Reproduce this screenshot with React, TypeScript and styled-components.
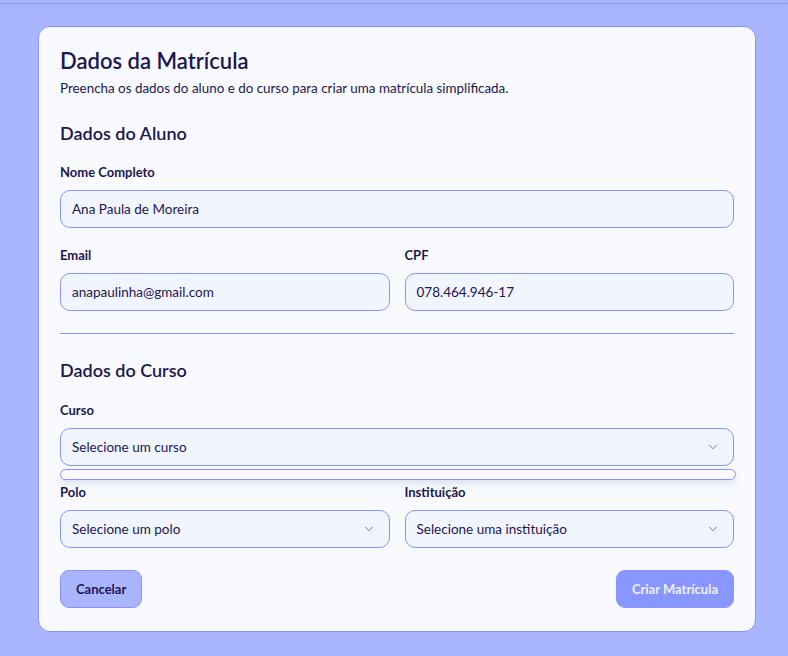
import React from "react";
import styled, { createGlobalStyle } from "styled-components";
import { ChevronDown } from "lucide-react";

const GlobalStyle = createGlobalStyle`
  html, body { margin: 0; padding: 0; background: #aab5ff; }
  body { padding-top: 3px; font-family: Lato, "Noto Sans", sans-serif; color: #1d1650; }
  * { box-sizing: border-box; }
`;

const Page = styled.div`
  border-top: 1px solid #8893f6;
  min-height: 652px;
  padding: 22px 0 0 38px;
`;

const Card = styled.div`
  width: 718px;
  height: 606px;
  background: #f8faff;
  border: 1px solid #8893f6;
  border-radius: 12px;
  padding: 20px 21px 23px 21px;
  display: flex;
  flex-direction: column;
`;

const Title = styled.h1`
  margin: 0;
  font-size: 22px;
  line-height: 28px;
  font-weight: 600;
  color: #1d1650;
`;

const Subtitle = styled.p`
  margin: 4px 0 0;
  font-size: 13.4px;
  line-height: 18px;
  color: #1d1650;
`;

const SectionTitle = styled.h2<{ $top: number }>`
  margin: ${(p) => p.$top}px 0 0;
  font-size: 18px;
  line-height: 24px;
  font-weight: 600;
  color: #1d1650;
`;

const Field = styled.div`
  display: flex;
  flex-direction: column;
  position: relative;
  min-width: 0;
`;

const FieldsBlock = styled.div<{ $top: number }>`
  margin-top: ${(p) => p.$top}px;
`;

const Row = styled.div<{ $top: number }>`
  display: grid;
  grid-template-columns: 1fr 1fr;
  column-gap: 15px;
  margin-top: ${(p) => p.$top}px;
`;

const Label = styled.label`
  font-size: 13px;
  line-height: 18px;
  font-weight: 700;
  color: #1d1650;
  margin-bottom: 9px;
`;

const Input = styled.div`
  height: 38px;
  border: 1px solid #8893f6;
  border-radius: 10px;
  background: #f0f5ff;
  padding: 0 11px;
  display: flex;
  align-items: center;
  justify-content: space-between;
  font-size: 13.5px;
  color: #1d1650;
`;

const Chevron = styled(ChevronDown)`
  color: #6e6a8e;
  margin-right: 2px;
`;

const SelectWrap = styled.div`
  position: relative;
`;

const Menu = styled.div`
  position: absolute;
  left: 0;
  right: -2px;
  top: calc(100% + 3px);
  height: 11px;
  border: 1.5px solid #8893f6;
  border-radius: 6px;
  background: #f8faff;
  box-shadow: 0 4px 6px rgba(60, 60, 110, 0.12);
`;

const Divider = styled.hr`
  margin: 22px 0 0;
  border: none;
  border-top: 1px solid #8893f6;
  height: 0;
`;

const Actions = styled.div`
  margin-top: auto;
  display: flex;
  justify-content: space-between;
`;

const Button = styled.button<{ $primary?: boolean }>`
  height: 38px;
  border-radius: 9px;
  font-family: inherit;
  font-size: 13px;
  font-weight: 700;
  padding: 0 15px;
  border: 1px solid ${(p) => (p.$primary ? "#8a96ff" : "#8893f6")};
  background: ${(p) => (p.$primary ? "#8a96ff" : "#aab5ff")};
  color: ${(p) => (p.$primary ? "#eef0ff" : "#1d1650")};
`;

const Select = ({ text, open }: { text: string; open?: boolean }) => (
  <SelectWrap>
    <Input>
      <span>{text}</span>
      <Chevron size={14} strokeWidth={1.6} />
    </Input>
    {open && <Menu />}
  </SelectWrap>
);

export default function App() {
  return (
    <>
      <GlobalStyle />
      <Page>
        <Card>
          <Title>Dados da Matrícula</Title>
          <Subtitle>Preencha os dados do aluno e do curso para criar uma matrícula simplificada.</Subtitle>

          <SectionTitle $top={24}>Dados do Aluno</SectionTitle>
          <FieldsBlock $top={18}>
            <Field>
              <Label>Nome Completo</Label>
              <Input>Ana Paula de Moreira</Input>
            </Field>
          </FieldsBlock>
          <Row $top={18}>
            <Field>
              <Label>Email</Label>
              <Input>anapaulinha@gmail.com</Input>
            </Field>
            <Field>
              <Label>CPF</Label>
              <Input>078.464.946-17</Input>
            </Field>
          </Row>
          <Divider />

          <SectionTitle $top={24}>Dados do Curso</SectionTitle>
          <FieldsBlock $top={19}>
            <Field>
              <Label>Curso</Label>
              <Select text="Selecione um curso" open />
            </Field>
          </FieldsBlock>
          <Row $top={17}>
            <Field>
              <Label>Polo</Label>
              <Select text="Selecione um polo" />
            </Field>
            <Field>
              <Label>Instituição</Label>
              <Select text="Selecione uma instituição" />
            </Field>
          </Row>

          <Actions>
            <Button>Cancelar</Button>
            <Button $primary>Criar Matrícula</Button>
          </Actions>
        </Card>
      </Page>
    </>
  );
}
